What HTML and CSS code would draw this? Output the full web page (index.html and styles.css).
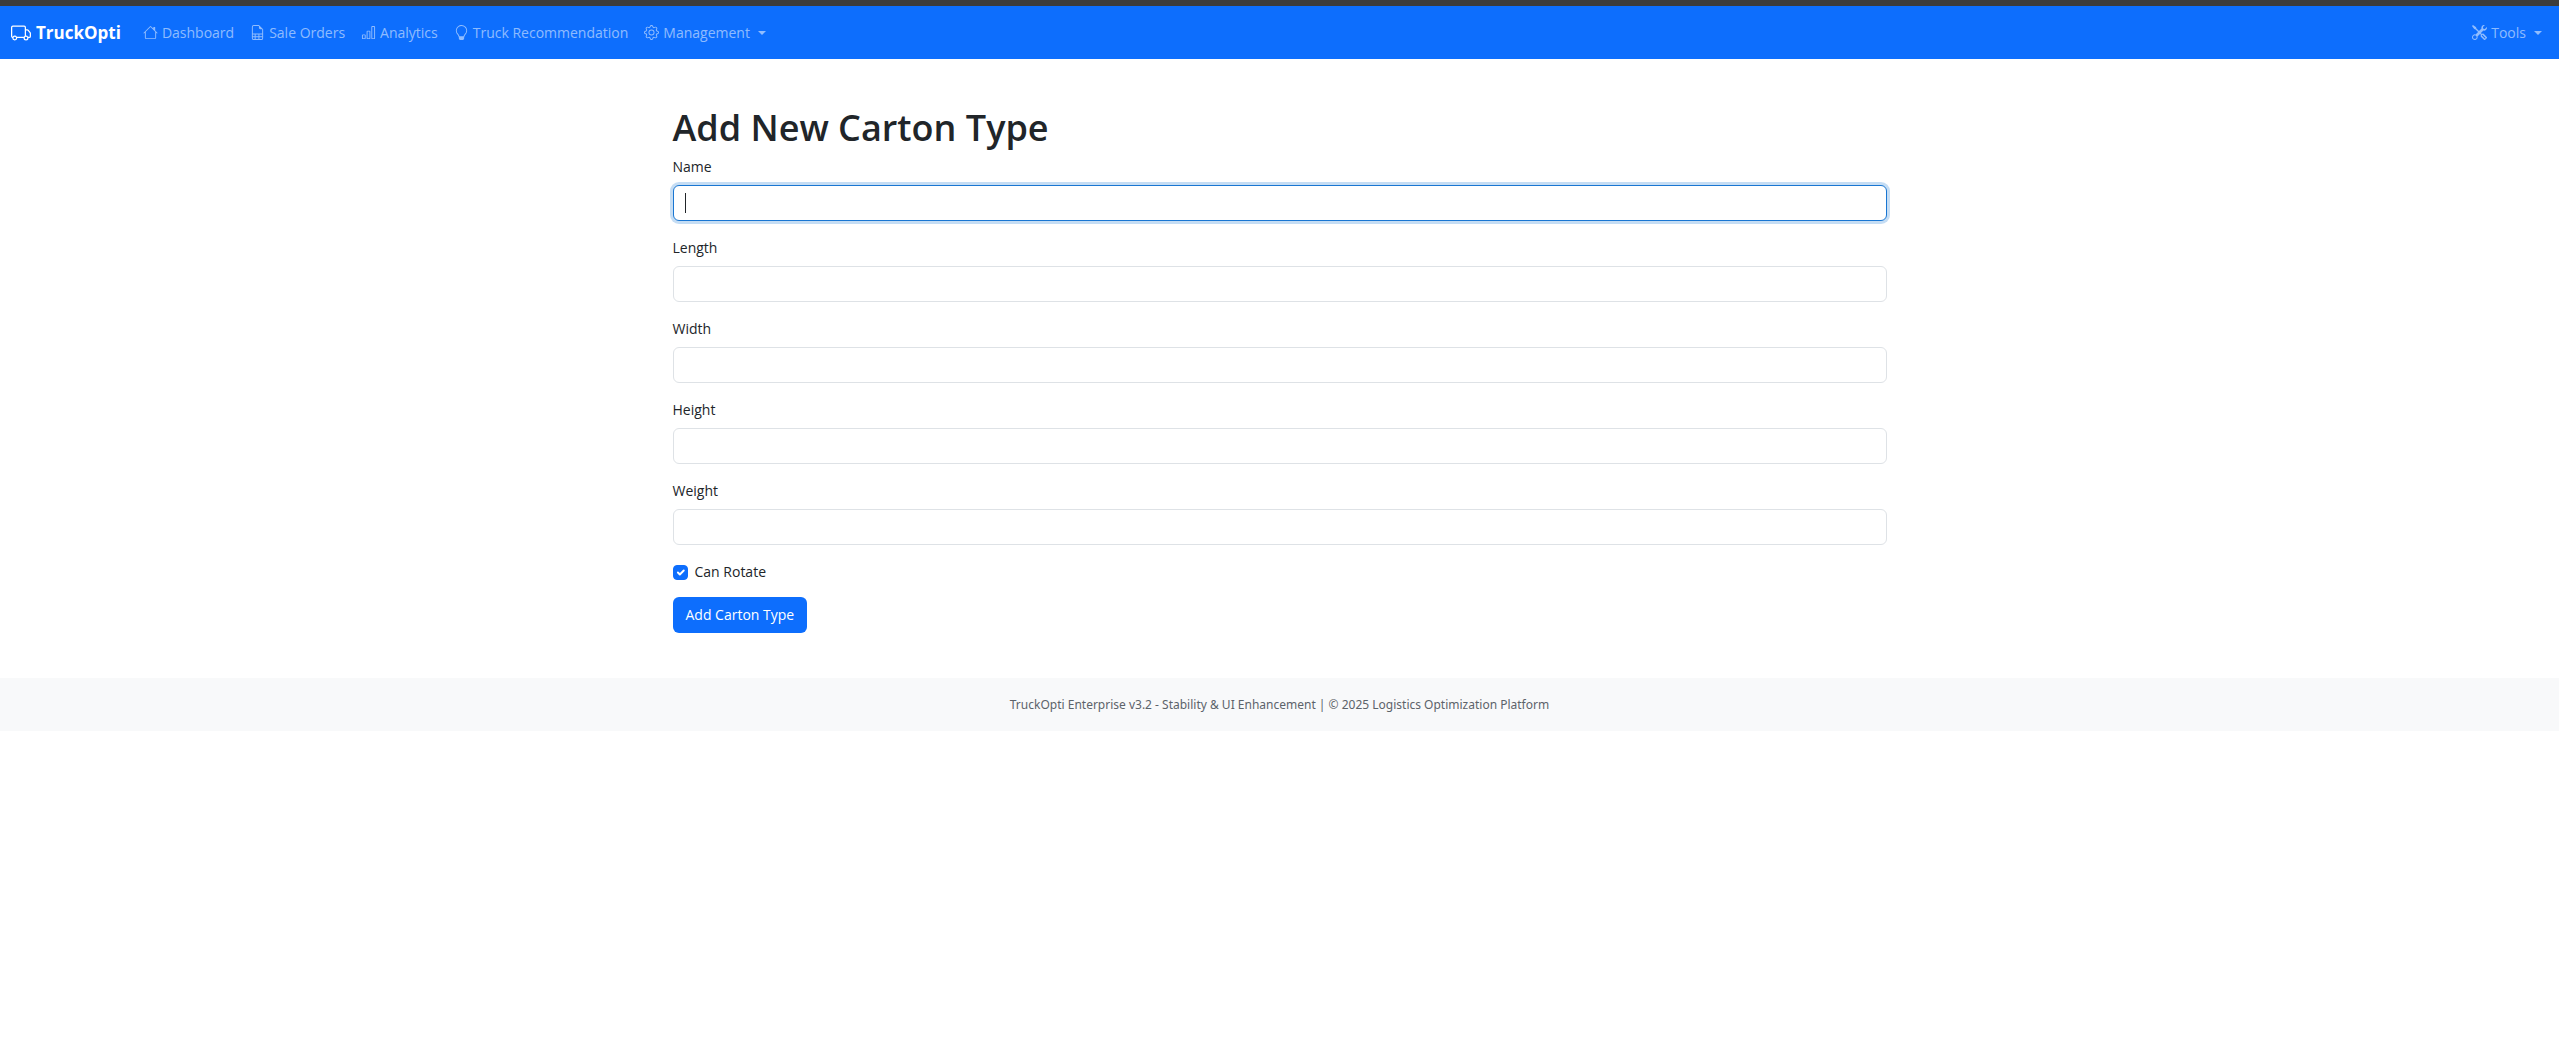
FILE: index.html
```html
<!DOCTYPE html>
<html lang="en">
<head>
<meta charset="utf-8">
<title>Add New Carton Type - TruckOpti</title>
<meta name="viewport" content="width=device-width, initial-scale=1">
<link rel="stylesheet" href="styles.css">
</head>
<body>
<nav class="navbar">
  <a class="brand" href="#">
    <svg class="brand-icon" viewBox="0 0 16 16" aria-hidden="true"><path d="M0 3.5A1.5 1.5 0 0 1 1.5 2h9A1.5 1.5 0 0 1 12 3.5V5h1.02a1.5 1.5 0 0 1 1.17.563l1.481 1.85a1.5 1.5 0 0 1 .329.938V10.5a1.5 1.5 0 0 1-1.5 1.5H14a2 2 0 1 1-4 0H5a2 2 0 1 1-3.998-.085A1.5 1.5 0 0 1 0 10.5zm1.294 7.456A2 2 0 0 1 4.732 11h5.536a2 2 0 0 1 .732-.732V3.5a.5.5 0 0 0-.5-.5h-9a.5.5 0 0 0-.5.5v7a.5.5 0 0 0 .294.456M12 10a2 2 0 0 1 1.732 1h.768a.5.5 0 0 0 .5-.5V8.35a.5.5 0 0 0-.11-.312l-1.48-1.85A.5.5 0 0 0 13.02 6H12zm-9 1a1 1 0 1 0 0 2 1 1 0 0 0 0-2m9 0a1 1 0 1 0 0 2 1 1 0 0 0 0-2"/></svg>
    TruckOpti
  </a>
  <a class="nav-link" href="#">
    <svg class="icon" viewBox="0 0 16 16" aria-hidden="true"><path d="M8.707 1.5a1 1 0 0 0-1.414 0L.646 8.146a.5.5 0 0 0 .708.708L2 8.207V13.5A1.5 1.5 0 0 0 3.5 15h9a1.5 1.5 0 0 0 1.5-1.5V8.207l.646.647a.5.5 0 0 0 .708-.708L13 5.793V2.5a.5.5 0 0 0-.5-.5h-1a.5.5 0 0 0-.5.5v1.293zM13 7.207V13.5a.5.5 0 0 1-.5.5h-9a.5.5 0 0 1-.5-.5V7.207l5-5z"/></svg>
    Dashboard
  </a>
  <a class="nav-link" href="#">
    <svg class="icon" viewBox="0 0 16 16" aria-hidden="true"><path d="M14 14V4.5L9.5 0H4a2 2 0 0 0-2 2v12a2 2 0 0 0 2 2h8a2 2 0 0 0 2-2M9.500 3A1.500 1.500 0 0 0 11 4.500h2V9H3V2a1 1 0 0 1 1-1h5.500zM3 12v-2h2v2zm0 1h2v2H4a1 1 0 0 1-1-1zm3 2v-2h3v2zm4 0v-2h3v1a1 1 0 0 1-1 1zm3-3h-3v-2h3zm-7 0v-2h3v2z"/></svg>
    Sale Orders
  </a>
  <a class="nav-link" href="#">
    <svg class="icon" viewBox="0 0 16 16" aria-hidden="true"><path d="M4 11H2v3h2zm5-4H7v7h2zm5-5v12h-2V2zm-2-1a1 1 0 0 0-1 1v12a1 1 0 0 0 1 1h2a1 1 0 0 0 1-1V2a1 1 0 0 0-1-1zM6 7a1 1 0 0 1 1-1h2a1 1 0 0 1 1 1v7a1 1 0 0 1-1 1H7a1 1 0 0 1-1-1zm-5 4a1 1 0 0 1 1-1h2a1 1 0 0 1 1 1v3a1 1 0 0 1-1 1H2a1 1 0 0 1-1-1z"/></svg>
    Analytics
  </a>
  <a class="nav-link" href="#">
    <svg class="icon" viewBox="0 0 16 16" aria-hidden="true"><path d="M2 6a6 6 0 1 1 10.174 4.31c-.203.196-.359.4-.453.619l-.762 1.769A.5.5 0 0 1 10.500 13a.5.5 0 0 1 0 1 .5.5 0 0 1 0 1l-.224.447a1 1 0 0 1-.894.553H6.618a1 1 0 0 1-.894-.553L5.500 15a.5.5 0 0 1 0-1 .5.5 0 0 1 0-1 .5.5 0 0 1-.460-.302l-.761-1.770a2 2 0 0 0-.453-.618A5.980 5.980 0 0 1 2 6m6-5a5 5 0 0 0-3.479 8.592c.263.254.514.564.676.941L5.830 12h4.342l.632-1.467c.162-.377.413-.687.676-.941A5 5 0 0 0 8 1"/></svg>
    Truck Recommendation
  </a>
  <button class="nav-link" type="button" aria-haspopup="true">
    <svg class="icon" viewBox="0 0 16 16" aria-hidden="true"><path d="M8 4.754a3.246 3.246 0 1 0 0 6.492 3.246 3.246 0 0 0 0-6.492M5.754 8a2.246 2.246 0 1 1 4.492 0 2.246 2.246 0 0 1-4.492 0"/><path d="M9.796 1.343c-.527-1.790-3.065-1.790-3.592 0l-.094.319a.873.873 0 0 1-1.255.520l-.292-.160c-1.640-.892-3.433.902-2.540 2.541l.159.292a.873.873 0 0 1-.520 1.255l-.319.094c-1.790.527-1.790 3.065 0 3.592l.319.094a.873.873 0 0 1 .520 1.255l-.160.292c-.892 1.640.901 3.434 2.541 2.540l.292-.159a.873.873 0 0 1 1.255.520l.094.319c.527 1.790 3.065 1.790 3.592 0l.094-.319a.873.873 0 0 1 1.255-.520l.292.160c1.640.893 3.434-.902 2.540-2.541l-.159-.292a.873.873 0 0 1 .520-1.255l.319-.094c1.790-.527 1.790-3.065 0-3.592l-.319-.094a.873.873 0 0 1-.520-1.255l.160-.292c.893-1.640-.902-3.433-2.541-2.540l-.292.159a.873.873 0 0 1-1.255-.520zm-2.633.283c.246-.835 1.428-.835 1.674 0l.094.319a1.873 1.873 0 0 0 2.693 1.115l.291-.160c.764-.415 1.600.420 1.184 1.185l-.159.292a1.873 1.873 0 0 0 1.116 2.692l.318.094c.835.246.835 1.428 0 1.674l-.319.094a1.873 1.873 0 0 0-1.115 2.693l.160.291c.415.764-.420 1.600-1.185 1.184l-.291-.159a1.873 1.873 0 0 0-2.693 1.116l-.094.318c-.246.835-1.428.835-1.674 0l-.094-.319a1.873 1.873 0 0 0-2.692-1.115l-.292.160c-.764.415-1.600-.420-1.184-1.185l.159-.291A1.873 1.873 0 0 0 1.945 8.930l-.319-.094c-.835-.246-.835-1.428 0-1.674l.319-.094A1.873 1.873 0 0 0 3.060 4.377l-.160-.292c-.415-.764.420-1.600 1.185-1.184l.292.159a1.873 1.873 0 0 0 2.692-1.115z"/></svg>
    Management
    <span class="caret"></span>
  </button>
  <button class="nav-link nav-end" type="button" aria-haspopup="true">
    <svg class="icon" viewBox="0 0 16 16" aria-hidden="true"><path d="M1 0 0 1l2.200 3.081a1 1 0 0 0 .815.419h.070a1 1 0 0 1 .708.293l2.675 2.675-2.617 2.654A3.003 3.003 0 0 0 0 13a3 3 0 1 0 5.878-.851l2.654-2.617.968.968-.305.914a1 1 0 0 0 .242 1.023l3.270 3.270a.997.997 0 0 0 1.414 0l1.586-1.586a.997.997 0 0 0 0-1.414l-3.270-3.270a1 1 0 0 0-1.023-.242L10.500 9.500l-.960-.960 2.680-2.643A3.005 3.005 0 0 0 16 3q0-.405-.102-.777l-2.140 2.141L12 4l-.364-1.757L13.777.102a3 3 0 0 0-3.675 3.680L7.462 6.460 4.793 3.793a1 1 0 0 1-.293-.707v-.071a1 1 0 0 0-.419-.814zm9.646 10.646a.5.5 0 0 1 .708 0l2.914 2.915a.5.5 0 0 1-.707.707l-2.915-2.914a.5.5 0 0 1 0-.708M3 11l.471.242.529.026.287.445.445.287.026.529L5 13l-.242.471-.026.529-.445.287-.287.445-.529.026L3 15l-.471-.242L2 14.732l-.287-.445L1.268 14l-.026-.529L1 13l.242-.471.026-.529.445-.287.287-.445.529-.026z"/></svg>
    Tools
    <span class="caret"></span>
  </button>
</nav>
<main class="content">
  <h1 class="title">Add New Carton Type</h1>
  <form class="form">
    <div class="field"><label for="name">Name</label><input class="control" id="name" type="text" autofocus></div>
    <div class="field"><label for="length">Length</label><input class="control" id="length" type="text"></div>
    <div class="field"><label for="width">Width</label><input class="control" id="width" type="text"></div>
    <div class="field"><label for="height">Height</label><input class="control" id="height" type="text"></div>
    <div class="field"><label for="weight">Weight</label><input class="control" id="weight" type="text"></div>
    <div class="check"><input class="checkbox" id="rotate" type="checkbox" checked><label for="rotate">Can Rotate</label></div>
    <button class="submit" type="submit">Add Carton Type</button>
  </form>
</main>
<footer class="footer">TruckOpti Enterprise v3.2 - Stability &amp; UI Enhancement | © 2025 Logistics Optimization Platform</footer>
</body>
</html>
```
FILE: styles.css
```css
*, *::before, *::after { box-sizing: border-box; }
body {
  margin: 0;
  border-top: 6px solid #3c3c3c;
  background: #fff;
  color: #212529;
  font: 14px/22px "Segoe UI", "Open Sans", "Noto Sans", sans-serif;
}
.navbar {
  display: flex;
  align-items: center;
  min-height: 53px;
  padding: 0 9px 0 11px;
  background: #0d6efd;
}
.brand {
  display: flex;
  align-items: center;
  gap: 5px;
  margin-right: 14px;
  color: #fff;
  font-size: 17px;
  font-weight: 700;
  text-decoration: none;
}
.brand-icon { width: 20px; height: 20px; fill: currentColor; }
.nav-link {
  display: flex;
  align-items: center;
  gap: 4px;
  padding: 8px;
  border: 0;
  background: none;
  color: rgba(255, 255, 255, .55);
  font: inherit;
  text-decoration: none;
  cursor: pointer;
}
.nav-end { margin-left: auto; }
.icon { width: 15px; height: 15px; fill: currentColor; }
.caret {
  margin-left: 4px;
  border-top: 4px solid;
  border-right: 4px solid transparent;
  border-left: 4px solid transparent;
}
.content {
  max-width: 1214px;
  margin: 0 auto;
  padding: 45px 0;
}
.title {
  margin: 0 0 4px;
  font-size: 36px;
  font-weight: 600;
  line-height: 48px;
}
.field { display: grid; gap: 7px; margin-bottom: 16px; }
.control {
  width: 100%;
  height: 36px;
  padding: 6px 11px;
  border: 1px solid #dee2e6;
  border-radius: 6px;
  background: #fff;
  color: inherit;
  font: inherit;
}
.control:focus {
  border-color: #1976d2;
  outline: 0;
  box-shadow: 0 0 0 3px rgba(25, 118, 210, .25);
}
.control:focus:not([value]) {
  background: linear-gradient(#212529, #212529) 11px center / 1px 20px no-repeat #fff;
  caret-color: transparent;
}
.check { display: flex; align-items: center; gap: 7px; margin-bottom: 14px; }
.checkbox {
  appearance: none;
  width: 15px;
  height: 15px;
  margin: 0;
  border-radius: 4px;
  border: 1px solid #dee2e6;
}
.checkbox:checked {
  border-color: #0d6efd;
  background: #0d6efd url("data:image/svg+xml,%3csvg xmlns='http://www.w3.org/2000/svg' viewBox='0 0 20 20'%3e%3cpath fill='none' stroke='%23fff' stroke-linecap='round' stroke-linejoin='round' stroke-width='3' d='m6 10 3 3 6-6'/%3e%3c/svg%3e") center / contain no-repeat;
}
.submit {
  height: 36px;
  padding: 0 13px;
  border: 0;
  border-radius: 6px;
  background: #0d6efd;
  color: #fff;
  font: inherit;
  cursor: pointer;
}
.footer {
  padding: 15px;
  background: #f8f9fa;
  color: #5c636a;
  font-family: "Segoe UI", "Noto Sans", sans-serif;
  font-size: 12px;
  line-height: 23px;
  text-align: center;
}
```
